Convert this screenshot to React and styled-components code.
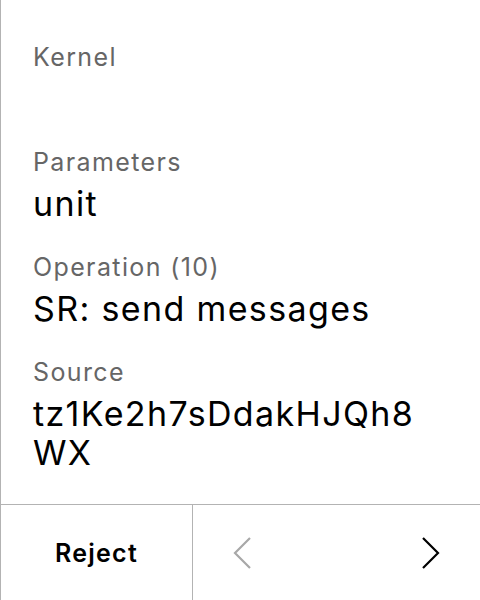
import React from 'react';
import styled, { createGlobalStyle } from 'styled-components';

const Global = createGlobalStyle`
  html, body {
    margin: 0;
    padding: 0;
    background: #fff;
  }
  body {
    font-family: Inter, "Noto Sans", sans-serif;
  }
`;

const S = {
  Page: styled.div`
    display: flex;
    flex-direction: column;
    width: 480px;
    height: 600px;
    box-sizing: border-box;
    border-left: 1px solid #b3b3b3;
    background: #fff;
  `,
  Content: styled.div`
    flex: 1;
    display: flex;
    flex-direction: column;
    gap: 29px;
    padding: 42px 50px 0 32px;
  `,
  Field: styled.div`
    display: flex;
    flex-direction: column;
    gap: 7px;
  `,
  Label: styled.div`
    font-size: 25px;
    line-height: 30px;
    letter-spacing: 0.055em;
    color: #666;
  `,
  Value: styled.div`
    font-size: 34px;
    line-height: 39px;
    min-height: 39px;
    letter-spacing: 0.04em;
    color: #000;
    word-break: break-all;
  `,
  Footer: styled.div`
    display: flex;
    height: 96px;
    box-sizing: border-box;
    border-top: 1px solid #b3b3b3;
  `,
  Reject: styled.button`
    width: 192px;
    border: none;
    border-right: 1px solid #b3b3b3;
    background: none;
    font-family: inherit;
    font-size: 25px;
    letter-spacing: 0.05em;
    font-weight: 600;
    color: #000;
    padding: 0;
  `,
  Nav: styled.div`
    flex: 1;
    display: flex;
    justify-content: space-between;
  `,
  Arrow: styled.button`
    width: 100px;
    border: none;
    background: none;
    padding: 0;
    display: flex;
    align-items: center;
    justify-content: center;
    color: ${(p) => (p.disabled ? '#a8a8a8' : '#000')};
  `,
};

const Chevron = ({ dir }) => (
  <svg width="20" height="34" viewBox="0 0 20 34" fill="none">
    <path
      d={dir === 'left' ? 'M17 2 L2 17 L17 32' : 'M3 2 L18 17 L3 32'}
      stroke="currentColor"
      strokeWidth="2.2"
    />
  </svg>
);

const fields = [
  { label: 'Kernel', value: '' },
  { label: 'Parameters', value: 'unit' },
  { label: 'Operation (10)', value: 'SR: send messages' },
  { label: 'Source', value: 'tz1Ke2h7sDdakHJQh8WX' },
];

const App = () => {
  return (
    <>
      <Global />
      <S.Page>
        <S.Content>
          {fields.map((f) => (
            <S.Field key={f.label}>
              <S.Label>{f.label}</S.Label>
              <S.Value>{f.value}</S.Value>
            </S.Field>
          ))}
        </S.Content>
        <S.Footer>
          <S.Reject>Reject</S.Reject>
          <S.Nav>
            <S.Arrow disabled>
              <Chevron dir="left" />
            </S.Arrow>
            <S.Arrow>
              <Chevron dir="right" />
            </S.Arrow>
          </S.Nav>
        </S.Footer>
      </S.Page>
    </>
  );
};

export default App;
